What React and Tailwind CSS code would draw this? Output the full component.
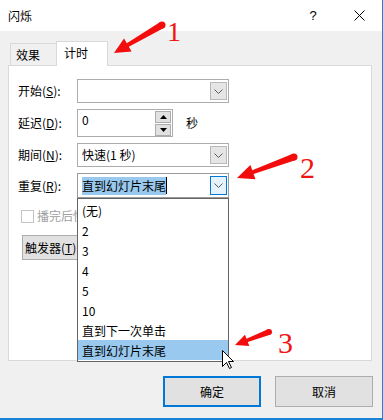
import React from "react"

const Chevron = () => (
  <svg width="9" height="5" viewBox="0 0 9 5">
    <path d="M0.5 0.5L4.5 4.5L8.5 0.5" fill="none" stroke="#5a5a5a" strokeWidth="1" />
  </svg>
)

const DropButton = ({ active }) => (
  <div
    className={
      active
        ? "w-[17px] my-[2px] mr-[1px] border border-[#0078d7] bg-[#e5f1fb] flex items-center justify-center"
        : "w-[17px] my-[2px] mr-[1px] border border-[#b9b9b9] bg-[#e5e5e5] flex items-center justify-center"
    }
  >
    <Chevron />
  </div>
)

const Label = ({ text, k }) => (
  <div className="w-[59px] shrink-0">
    {text}(<span className="underline">{k}</span>):
  </div>
)

const SpinArrow = ({ up }) => (
  <svg width="7" height="4" viewBox="0 0 7 4">
    <path d={up ? "M0 4L3.5 0L7 4Z" : "M0 0L3.5 4L7 0Z"} fill="#000" />
  </svg>
)

// red hand-drawn style arrow, tail -> tip
const arrowPoints = (x1, y1, x2, y2, tailW, neckW, headLen, headW) => {
  const dx = x2 - x1
  const dy = y2 - y1
  const len = Math.hypot(dx, dy)
  const ux = dx / len
  const uy = dy / len
  const nx = -uy
  const ny = ux
  const bx = x2 - ux * headLen
  const by = y2 - uy * headLen
  const pts = [
    [x1 + (nx * tailW) / 2, y1 + (ny * tailW) / 2],
    [bx + (nx * neckW) / 2, by + (ny * neckW) / 2],
    [bx + (nx * headW) / 2, by + (ny * headW) / 2],
    [x2, y2],
    [bx - (nx * headW) / 2, by - (ny * headW) / 2],
    [bx - (nx * neckW) / 2, by - (ny * neckW) / 2],
    [x1 - (nx * tailW) / 2, y1 - (ny * tailW) / 2],
  ]
  return pts.map((p) => p.map((v) => v.toFixed(1)).join(",")).join(" ")
}

const arrows = [
  { x1: 162, y1: 25, x2: 114, y2: 53, tail: 7, neck: 4, hl: 16, hw: 15 },
  { x1: 294, y1: 157, x2: 237, y2: 178, tail: 7, neck: 4, hl: 17, hw: 15 },
  { x1: 269, y1: 332, x2: 235, y2: 345, tail: 6, neck: 3.5, hl: 13, hw: 12 },
]

const listItems = ["(无)", "2", "3", "4", "5", "10", "直到下一次单击", "直到幻灯片末尾"]

export default function App() {
  return (
    <div className="relative w-[383px] h-[420px] bg-[#f0f0f0] border-r border-b-2 border-[#1883d7] flex flex-col text-[12px] text-black font-['Noto_Sans_CJK_SC',sans-serif] leading-[16px] overflow-hidden">
      {/* title bar */}
      <div className="h-[31px] bg-white flex items-center shrink-0">
        <div className="pl-[8px]">闪烁</div>
        <div className="ml-auto flex h-full">
          <div className="w-[46px] flex items-center justify-center text-[13px] font-['Liberation_Sans',sans-serif]">?</div>
          <div className="w-[46px] flex items-center justify-center">
            <svg width="11" height="11" viewBox="0 0 11 11">
              <path d="M0.5 0.5L10.5 10.5M10.5 0.5L0.5 10.5" stroke="#000" strokeWidth="1" />
            </svg>
          </div>
        </div>
      </div>

      <div className="pl-[8px] pt-[10px] flex flex-col">
        {/* tabs */}
        <div className="relative z-10 h-[25px] -mb-[1px] flex items-end pl-[2px]">
          <div className="h-[22px] mb-[1px] w-[46px] border-l border-t border-[#d9d9d9] bg-[#f0f0f0] pl-[5px] flex items-center">
            效果
          </div>
          <div className="h-[25px] w-[52px] border-l border-t border-r border-[#d9d9d9] bg-white pl-[7px] pb-[2px] flex items-center">
            计时
          </div>
        </div>

        {/* panel */}
        <div className="w-[364px] h-[296px] border border-[#d9d9d9] bg-white pl-[9px] pt-[13px] flex flex-col">
          <div className="flex items-center h-[24px]">
            <Label text="开始" k="S" />
            <div className="w-[152px] h-[24px] border border-[#acacac] bg-white flex justify-end">
              <DropButton />
            </div>
          </div>

          <div className="flex items-center h-[28px] mt-[6px]">
            <Label text="延迟" k="D" />
            <div className="w-[96px] h-[28px] border border-[#acacac] bg-white flex">
              <div className="flex-1 pl-[4px] pt-[2px]">0</div>
              <div className="w-[16px] mr-[1px] pt-[1px] flex flex-col gap-[1px]">
                <div className="h-[12px] border border-[#adadad] bg-[#e1e1e1] flex items-center justify-center">
                  <SpinArrow up />
                </div>
                <div className="h-[12px] border border-[#adadad] bg-[#e1e1e1] flex items-center justify-center">
                  <SpinArrow />
                </div>
              </div>
            </div>
            <div className="ml-[13px]">秒</div>
          </div>

          <div className="flex items-center h-[24px] mt-[6px]">
            <Label text="期间" k="N" />
            <div className="w-[152px] h-[24px] border border-[#acacac] bg-white flex">
              <div className="flex-1 pl-[4px] flex items-center">快速(1 秒)</div>
              <DropButton />
            </div>
          </div>

          <div className="flex items-center h-[25px] mt-[6px]">
            <Label text="重复" k="R" />
            <div className="relative z-20">
              <div className="w-[152px] h-[25px] border border-[#9a9a9a] bg-white flex">
                <div className="flex-1 pl-[4px] flex items-center">
                  <span className="bg-[#99c9ef] h-[18px] leading-[18px]">直到幻灯片末尾</span>
                  <span className="w-px h-[17px] bg-black" />
                </div>
                <DropButton active />
              </div>
              <div className="absolute left-0 top-full w-[152px] border border-[#646464] bg-white py-[1px]">
                {listItems.map((t, i) => (
                  <div
                    key={t}
                    className={
                      i === listItems.length - 1
                        ? "h-[20px] pl-[4px] pt-[3px] bg-[#99c9ef]"
                        : "h-[20px] pl-[4px] pt-[3px]"
                    }
                  >
                    {t}
                  </div>
                ))}
              </div>
            </div>
          </div>

          {/* these two sit under the open list, so clip them where it starts */}
          <div className="flex items-center mt-[10px] pl-[3px] text-[#a0a0a0]">
            <div className="w-[13px] h-[13px] border border-[#c4c4c4] bg-white shrink-0" />
            <div className="ml-[3px] w-[41px] overflow-hidden whitespace-nowrap">播完后快退(W)</div>
          </div>

          <div className="mt-[11px] pl-[4px]">
            <div className="w-[55px] overflow-hidden">
              <div className="w-[86px] h-[25px] border border-[#adadad] bg-[#e1e1e1] pl-[2px] flex items-center whitespace-nowrap">
                触发器(<span className="underline">T</span>)
              </div>
            </div>
          </div>
        </div>

        {/* buttons */}
        <div className="mt-[15px] flex justify-end gap-[14px] pr-[9px]">
          <div className="w-[98px] h-[31px] border-2 border-[#0078d7] bg-[#e1e1e1] flex items-center justify-center">确定</div>
          <div className="w-[98px] h-[31px] border border-[#adadad] bg-[#e1e1e1] flex items-center justify-center">取消</div>
        </div>
      </div>

      {/* annotations */}
      <svg className="absolute inset-0 z-30 pointer-events-none" width="383" height="420" viewBox="0 0 383 420">
        {arrows.map((a, i) => (
          <g key={i} fill="#f20c0c">
            <polygon points={arrowPoints(a.x1, a.y1, a.x2, a.y2, a.tail, a.neck, a.hl, a.hw)} />
            <circle cx={a.x1} cy={a.y1} r={a.tail / 2} />
          </g>
        ))}
        <path
          d="M222.5 350.5L222.5 366.5L226.5 362.5L229.5 368.5L231.5 367.5L228.5 361.5L233.5 361.5Z"
          fill="#fff"
          stroke="#000"
          strokeWidth="1"
          strokeLinejoin="miter"
        />
      </svg>
      <span className="absolute z-30 left-[167px] top-[18px] text-[28px] leading-none text-[#f01414] font-['Liberation_Serif',serif]">1</span>
      <span className="absolute z-30 left-[300px] top-[153px] text-[30px] leading-none text-[#f01414] font-['Liberation_Serif',serif]">2</span>
      <span className="absolute z-30 left-[278px] top-[328px] text-[30px] leading-none text-[#f01414] font-['Liberation_Serif',serif]">3</span>
    </div>
  )
}
